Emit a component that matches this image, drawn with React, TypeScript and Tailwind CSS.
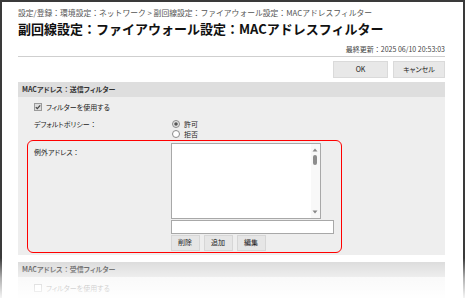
import React from "react";

const font = {
  fontFamily: '"Noto Sans CJK JP", "Noto Sans", sans-serif',
};

function C() {
  return <span className="[font-feature-settings:normal]">：</span>;
}

function Checkbox({ checked }: { checked: boolean }) {
  return (
    <svg width="8" height="8" viewBox="0 0 8 8" className="shrink-0">
      <rect x="0.5" y="0.5" width="7" height="7" fill={checked ? "#dcdcdc" : "#fff"} stroke="#9a9a9a" />
      {checked && <path d="M1.8 4.1 L3.3 5.6 L6.2 2.3" fill="none" stroke="#444" strokeWidth="1.2" />}
    </svg>
  );
}

function Radio({ checked }: { checked: boolean }) {
  return (
    <svg width="8" height="8" viewBox="0 0 8 8" className="shrink-0">
      <circle cx="4" cy="4" r="3.5" fill={checked ? "#e6e6e6" : "#fff"} stroke="#8a8a8a" />
      {checked && <circle cx="4" cy="4" r="1.8" fill="#555" />}
    </svg>
  );
}

function SmallBtn({ label }: { label: string }) {
  return (
    <div className="w-[29px] h-[16px] bg-[#e6e6e6] border border-[#d6d6d6] flex items-center justify-center text-[7px] text-[#222]">
      {label}
    </div>
  );
}

export default function App() {
  return (
    <div
      style={font}
      className="relative w-[466px] h-[298px] overflow-hidden bg-white [font-feature-settings:'palt']"
    >
      <div className="absolute inset-0 border-l-[2px] border-t-[2px] border-r-[2px] border-[#3a3a3a] mr-[1px] pointer-events-none" />
      <div className="flex flex-col pl-[18px] pr-[21px] text-[#333]">
        <div className="mt-[8px] h-[10px] leading-[10px] text-[7.8px] text-[#555] whitespace-nowrap [font-feature-settings:normal]">
          設定/登録：環境設定：ネットワーク &gt; 副回線設定：ファイアウォール設定：MACアドレスフィルター
        </div>
        <div className="mt-[3px] h-[16px] leading-[16px] text-[13px] font-bold text-[#111] whitespace-nowrap [font-feature-settings:normal]">
          副回線設定：ファイアウォール設定：MACアドレスフィルター
        </div>
        <div className="mt-[7px] h-[10px] leading-[10px] text-[7px] text-[#444] text-right whitespace-nowrap">
          最終更新<C />2025 06/10 20:53:03
        </div>
        <div className="mt-[2px] h-[1px] bg-[#cfcfcf]" />
        <div className="mt-[4px] flex justify-end gap-[5px]">
          <div className="w-[55px] h-[17px] bg-[#e8e8e8] border border-[#dadada] flex items-center justify-center text-[7px] text-[#222]">
            OK
          </div>
          <div className="w-[52px] h-[17px] bg-[#e8e8e8] border border-[#dadada] flex items-center justify-center text-[7px] text-[#222]">
            キャンセル
          </div>
        </div>
        <div className="mt-[4px] h-[15px] bg-[#dedede] pl-[4px] flex items-center text-[7px] font-bold text-[#333]">
          <span>MACアドレス<C />送信フィルター</span>
        </div>
        <div className="bg-[#eeeeee] pl-[9px] pt-[5px] pb-[2px] flex flex-col">
          <div className="ml-[7px] h-[10px] flex items-center gap-[4px] text-[7px] text-[#222]">
            <Checkbox checked />
            <span>フィルターを使用する</span>
          </div>
          <div className="ml-[7px] mt-[7px] flex text-[#222]">
            <div className="w-[137px] h-[10px] leading-[10px] text-[7px]">デフォルトポリシー<C /></div>
            <div className="flex flex-col">
              <div className="h-[10px] flex items-center gap-[4px] pl-[1px] text-[7px]">
                <Radio checked />
                <span>許可</span>
              </div>
              <div className="h-[10px] flex items-center gap-[4px] pl-[1px] text-[7px]">
                <Radio checked={false} />
                <span>拒否</span>
              </div>
            </div>
          </div>
          <div className="mt-[1px] w-[315px] h-[113px] border-[1.5px] border-[#ff0000] rounded-[6px] flex pl-[6px] pt-[1.5px] text-[#222]">
            <div className="w-[136.5px] pt-[4px] h-[14px] leading-[10px] text-[7px]">例外アドレス<C /></div>
            <div className="flex flex-col">
              <div className="w-[150px] h-[76px] bg-white border border-[#a8a8a8] flex justify-end">
                <div className="w-[9px] h-full bg-[#f8f8f8] flex flex-col items-center justify-between py-[4px]">
                  <div className="flex flex-col items-center gap-[3px]">
                    <svg width="6" height="4" viewBox="0 0 6 4">
                      <path d="M0.5 3.5 L3 0.5 L5.5 3.5 Z" fill="#888" />
                    </svg>
                    <div className="w-[4px] h-[10px] rounded-[2px] bg-[#8c8c8c]" />
                  </div>
                  <svg width="6" height="4" viewBox="0 0 6 4">
                    <path d="M0.5 0.5 L3 3.5 L5.5 0.5 Z" fill="#888" />
                  </svg>
                </div>
              </div>
              <div className="mt-[1px] w-[163px] h-[14px] bg-white border border-[#a8a8a8]" />
              <div className="mt-[1px] flex gap-[4px]">
                <SmallBtn label="削除" />
                <SmallBtn label="追加" />
                <SmallBtn label="編集" />
              </div>
            </div>
          </div>
        </div>
        <div className="mt-[7px] h-[15px] bg-[#d8d8d8] pl-[4px] flex items-center text-[7px] font-bold text-[#333]">
          <span>MACアドレス<C />受信フィルター</span>
        </div>
        <div className="bg-[#f2f2f2] pl-[16px] pt-[6px] h-[30px]">
          <div className="h-[10px] flex items-center gap-[4px] text-[7px]">
            <Checkbox checked={false} />
            <span>フィルターを使用する</span>
          </div>
        </div>
      </div>
      <div className="absolute left-0 right-0 bottom-0 h-[40px] bg-gradient-to-b from-white/0 via-white/60 to-white/95 pointer-events-none" />
    </div>
  );
}
